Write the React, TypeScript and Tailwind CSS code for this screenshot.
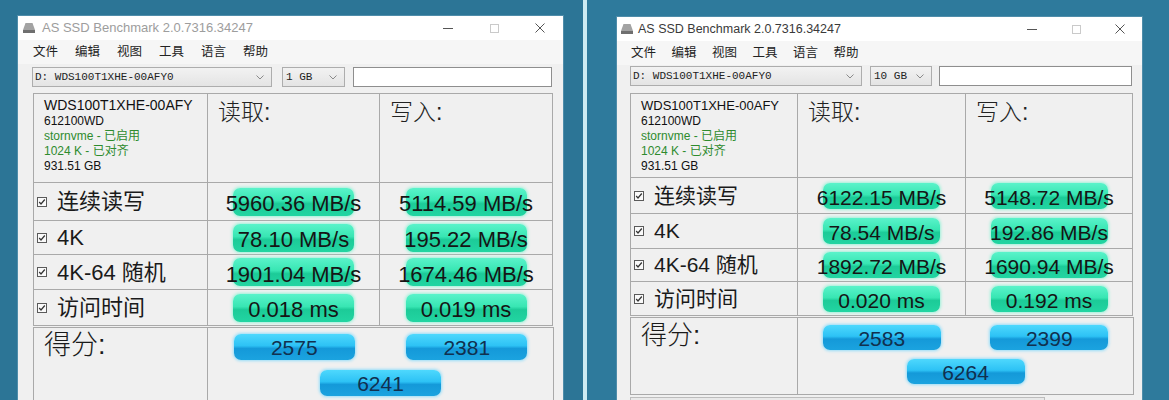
import React from 'react';

type Row = { label: React.ReactNode; read: string; write: string };

type WinProps = {
  big: boolean;
  titleColor: string;
  size: string;
  rows: Row[];
  score: [string, string, string];
};

const sans = "font-['Liberation_Sans',Arial,sans-serif]";
const cjk = "font-['Liberation_Sans','Noto_Sans_CJK_SC',sans-serif]";
const mono = "font-['Liberation_Mono','Courier_New',monospace]";

const menu = ['文件', '编辑', '视图', '工具', '语言', '帮助'];

const DiskIcon = () => (
  <svg width="14" height="12" viewBox="0 0 14 12" className="shrink-0">
    <path d="M3.5 1h7l2.5 7H1z" fill="#a3a3a3" />
    <rect x="1" y="8" width="12" height="3" fill="#6f6f6f" />
  </svg>
);

const Chevron = () => (
  <svg width="8" height="5" viewBox="0 0 8 5" className="shrink-0">
    <path d="M0.5 0.5L4 4L7.5 0.5" fill="none" stroke="#8a8a8a" />
  </svg>
);

const Check = () => (
  <svg width="10" height="10" viewBox="0 0 10 10" className="shrink-0">
    <rect x="0.5" y="0.5" width="9" height="9" fill="#fafafa" stroke="#5a5a5a" />
    <path d="M2.2 5l1.8 2 3.8-4.5" fill="none" stroke="#333" strokeWidth="1.2" />
  </svg>
);

const greenPill =
  'rounded-[7px] bg-[linear-gradient(180deg,#5af3ca_0%,#38e6b3_45%,#1ccb98_56%,#22d5a2_100%)] shadow-[0_0_3px_1px_#9cf2d9]';
const bluePill =
  'rounded-[7px] bg-[linear-gradient(180deg,#4ed8fd_0%,#2dc2f5_45%,#1499d9_56%,#1ba3df_100%)] shadow-[0_0_3px_1px_#96def9]';

const Window: React.FC<WinProps> = ({ big, titleColor, size, rows, score }) => {
  const rowH = big
    ? ['h-[38px]', 'h-[34px]', 'h-[35px]', 'h-[36px]']
    : ['h-[36px]', 'h-[35px]', 'h-[33px]', 'h-[34px]'];
  const cols = big ? 'grid-cols-[174px_172px_173px]' : 'grid-cols-[167px_168px_167px]';
  const valFs = big ? 'text-[22px]' : 'text-[21px]';
  const pill = big ? 'w-[121px] h-[28px]' : 'w-[117px] h-[26px]';
  const scorePill = big ? 'w-[121px] h-[26px]' : 'w-[118px] h-[25px]';
  const cell = 'border-r border-b border-[#a9a9a9]';

  return (
    <div className={`${big ? 'w-[545px]' : 'w-[525px]'} bg-[#f0f0f0] shadow-[0_0_0_1px_#4f8daa]`}>
      {/* title bar */}
      <div className={`flex h-[24px] items-center bg-white ${big ? 'pl-[4px]' : 'pl-[3px]'}`}>
        <DiskIcon />
        <span
          className={`${sans} ${big ? 'ml-[6px] text-[13px]' : 'ml-[4px] text-[12.5px]'} ${titleColor}`}
        >
          AS SSD Benchmark 2.0.7316.34247
        </span>
        <div className="ml-auto flex h-full">
          <div className={`flex ${big ? 'w-[46px]' : 'w-[44px]'} items-center justify-center`}>
            <div className="h-px w-[10px] bg-[#555]" />
          </div>
          <div className={`flex ${big ? 'w-[46px]' : 'w-[44px]'} items-center justify-center`}>
            <div className="h-[9px] w-[9px] border border-[#cacaca]" />
          </div>
          <div className={`flex ${big ? 'w-[46px]' : 'w-[44px]'} items-center justify-center`}>
            <svg width="10" height="10" viewBox="0 0 10 10">
              <path d="M0.5 0.5l9 9M9.5 0.5l-9 9" stroke="#555" strokeWidth="1" />
            </svg>
          </div>
        </div>
      </div>

      {/* menu bar */}
      <div
        className={`flex h-[24px] items-center bg-[#f6f6f6] ${cjk} text-[12.5px] text-[#222] ${
          big ? 'gap-[17px] pl-[15px]' : 'gap-[15.5px] pl-[14px]'
        }`}
      >
        {menu.map((m) => (
          <span key={m} className="w-[25px]">
            {m}
          </span>
        ))}
      </div>

      {/* toolbar */}
      <div className={`flex h-[20px] items-center ${big ? 'mt-[3px] pl-[14px]' : 'mt-[1px] pl-[13px]'}`}>
        <div
          className={`flex h-full items-center justify-between border border-[#adadad] bg-[linear-gradient(180deg,#f2f2f2,#e4e4e4)] pl-[2px] pr-[7px] ${
            big ? 'w-[240px]' : 'w-[232px]'
          }`}
        >
          <span className={`${mono} text-[11px] text-[#222]`}>D: WDS100T1XHE-00AFY0</span>
          <Chevron />
        </div>
        <div
          className={`flex h-full items-center justify-between border border-[#adadad] bg-[linear-gradient(180deg,#f2f2f2,#e4e4e4)] pl-[3px] pr-[7px] ${
            big ? 'ml-[10px] w-[63px]' : 'ml-[8px] w-[62px]'
          }`}
        >
          <span className={`${mono} text-[11px] text-[#222]`}>{size}</span>
          <Chevron />
        </div>
        <div
          className={`h-full border border-[#8e8e8e] bg-white ${
            big ? 'ml-[8px] w-[199px]' : 'ml-[7px] w-[193px]'
          }`}
        />
      </div>

      {/* results table */}
      <div className={big ? 'ml-[15px] mt-[6px]' : 'ml-[13px] mt-[7px]'}>
        <div className={`grid w-fit ${cols} border-l border-t border-[#a9a9a9]`}>
          <div className={`${cell} ${big ? 'h-[89px]' : 'h-[84px]'} pl-[10px] pt-[3px] ${sans} leading-[15px]`}>
            <div className={`${big ? 'text-[14px]' : 'text-[13px]'} leading-[17px] text-[#111]`}>
              WDS100T1XHE-00AFY
            </div>
            <div className="text-[12px] text-[#111]">612100WD</div>
            <div className={`${cjk} text-[12px] text-[#2e8b2e]`}>stornvme - 已启用</div>
            <div className={`${cjk} text-[12px] text-[#2e8b2e]`}>1024 K - 已对齐</div>
            <div className="text-[12px] text-[#111]">931.51 GB</div>
          </div>
          <div className={`${cell} pl-[10px] pt-[1px] ${cjk} font-light text-[23px] text-[#222]`}>读取:</div>
          <div className={`${cell} pl-[10px] pt-[1px] ${cjk} font-light text-[23px] text-[#222]`}>写入:</div>

          {rows.map((r, i) => (
            <React.Fragment key={i}>
              <div className={`${cell} ${rowH[i]} flex items-center gap-[10px] pl-[3px]`}>
                <Check />
                <span className={`${cjk} ${big ? 'text-[22px]' : 'text-[21px]'} text-[#1a1a1a]`}>
                  {r.label}
                </span>
              </div>
              {[r.read, r.write].map((v, j) => (
                <div key={j} className={`${cell} ${rowH[i]} flex items-center justify-center`}>
                  <div className={`flex items-center justify-center ${pill} ${greenPill}`}>
                    <span className={`${sans} ${valFs} translate-y-[2px] whitespace-nowrap text-[#151515]`}>
                      {v}
                    </span>
                  </div>
                </div>
              ))}
            </React.Fragment>
          ))}
        </div>

        {/* score box */}
        <div
          className={`mt-[1px] grid w-fit ${cols} border border-[#a9a9a9] ${big ? 'h-[82px]' : 'h-[78px]'}`}
        >
          <div
            className={`border-r border-[#a9a9a9] pl-[10px] ${cjk} font-light ${
              big ? 'text-[27px]' : 'text-[26px]'
            } leading-[34px] text-[#1a1a1a]`}
          >
            得分:
          </div>
          <div className="col-span-2 flex flex-col">
            <div className={`grid grid-cols-2 ${big ? 'mt-[6px]' : 'mt-[7px]'}`}>
              {[score[0], score[1]].map((s, j) => (
                <div key={j} className="flex justify-center">
                  <div className={`flex items-center justify-center ${scorePill} ${bluePill}`}>
                    <span className={`${sans} text-[21px] translate-y-[1px] text-[#11304f]`}>{s}</span>
                  </div>
                </div>
              ))}
            </div>
            <div className={`flex justify-center ${big ? 'mt-[10px]' : 'mt-[9px]'}`}>
              <div className={`flex items-center justify-center ${scorePill} ${bluePill}`}>
                <span className={`${sans} text-[21px] translate-y-[1px] text-[#11304f]`}>{score[2]}</span>
              </div>
            </div>
          </div>
        </div>

        <div className="mt-[2px] h-[20px] w-[415px] border border-[#bdbdbd] bg-[#e9e9e9]" />
      </div>
    </div>
  );
};

const labels: React.ReactNode[] = ['连续读写', '4K', '4K-64 随机', '访问时间'];

export default function App() {
  const leftRows: Row[] = [
    { label: labels[0], read: '5960.36 MB/s', write: '5114.59 MB/s' },
    { label: labels[1], read: '78.10 MB/s', write: '195.22 MB/s' },
    { label: labels[2], read: '1901.04 MB/s', write: '1674.46 MB/s' },
    { label: labels[3], read: '0.018 ms', write: '0.019 ms' },
  ];
  const rightRows: Row[] = [
    { label: labels[0], read: '6122.15 MB/s', write: '5148.72 MB/s' },
    { label: labels[1], read: '78.54 MB/s', write: '192.86 MB/s' },
    { label: labels[2], read: '1892.72 MB/s', write: '1690.94 MB/s' },
    { label: labels[3], read: '0.020 ms', write: '0.192 ms' },
  ];

  return (
    <div className="flex h-[400px] w-[1169px] overflow-hidden bg-[#2e7a9c]">
      <div className="w-[583px] shrink-0 bg-[#2c7596] pl-[18px] pt-[16px]">
        <Window big titleColor="text-[#9d9d9d]" size="1 GB" rows={leftRows} score={['2575', '2381', '6241']} />
      </div>
      <div className="w-[4px] shrink-0 bg-[#cdebf3]" />
      <div className="flex-1 bg-[#2e7a9c] pl-[30px] pt-[17px]">
        <Window
          big={false}
          titleColor="text-[#3a3a3a]"
          size="10 GB"
          rows={rightRows}
          score={['2583', '2399', '6264']}
        />
      </div>
    </div>
  );
}
